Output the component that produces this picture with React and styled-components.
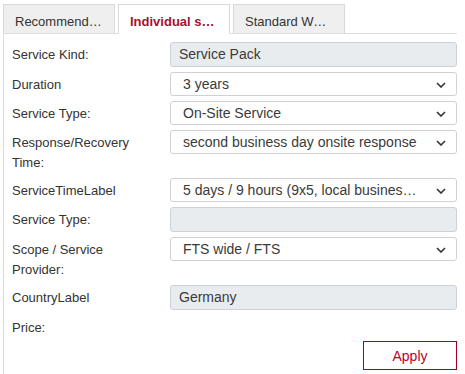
import { Fragment } from "react";
import styled, { createGlobalStyle } from "styled-components";

const GlobalStyle = createGlobalStyle`
    body {
        margin: 0;
        background: #ffffff;
        font-family: "Liberation Sans", Arial, sans-serif;
        color: #333333;
    }
`;

const TABS = [
    { id: "recommended", title: "Recommended Services" },
    { id: "individual", title: "Individual service" },
    { id: "standard", title: "Standard Warranty" },
];

const FIELDS = [
    { label: "Service Kind:", value: "Service Pack", disabled: true },
    { label: "Duration", value: "3 years" },
    { label: "Service Type:", value: "On-Site Service" },
    { label: "Response/Recovery Time:", value: "second business day onsite response" },
    { label: "ServiceTimeLabel", value: "5 days / 9 hours (9x5, local business hours)" },
    { label: "Service Type:", value: "", disabled: true },
    { label: "Scope / Service Provider:", value: "FTS wide / FTS" },
    { label: "CountryLabel", value: "Germany", disabled: true },
];

const Wrapper = styled.div`
    padding: 4px 8px 0 3px;
`;

const TabBar = styled.div`
    display: flex;
    align-items: flex-end;
    gap: 3px;
    height: 29px;
    border-bottom: 1px solid #dddddd;
`;

const Tab = styled.div`
    box-sizing: border-box;
    width: 112px;
    height: 30px;
    margin-bottom: -1px;
    padding: 9px 11px 0;
    border: 1px solid #d9d9d9;
    border-bottom-color: ${(p) => (p.$active ? "#ffffff" : "#dddddd")};
    background: ${(p) => (p.$active ? "#ffffff" : "#efefef")};
    color: ${(p) => (p.$active ? "#a8102f" : "#333333")};
    font-size: 13px;
    font-weight: ${(p) => (p.$active ? 700 : 400)};
    line-height: 16px;
    text-align: center;
    white-space: nowrap;
    overflow: hidden;
    text-overflow: ellipsis;
`;

const Panel = styled.div`
    border-left: 1px solid #dddddd;
    padding: 8px 0 8px 8px;
`;

const Form = styled.div`
    display: grid;
    grid-template-columns: 158px 1fr;
    row-gap: 5px;
    align-items: start;
`;

const Label = styled.div`
    padding: 3px 30px 0 0;
    font-size: 13px;
    line-height: 20px;
    color: #333333;
`;

const Control = styled.div`
    box-sizing: border-box;
    position: relative;
    height: ${(p) => (p.$disabled ? "25px" : "24px")};
    padding: ${(p) => (p.$disabled ? "0 12px 0 8px" : "0 36px 0 12px")};
    border: 1px solid #ced2d7;
    border-radius: 3px;
    background: ${(p) => (p.$disabled ? "#e9ecef" : "#ffffff")};
    color: #3a3a3a;
    font-size: 14px;
    line-height: ${(p) => (p.$disabled ? "23px" : "22px")};
    white-space: nowrap;
    overflow: hidden;
    text-overflow: ellipsis;
`;

const Chevron = styled.svg`
    position: absolute;
    right: 10px;
    top: 9px;
`;

const Footer = styled.div`
    display: flex;
    justify-content: flex-end;
    margin-top: 3px;
`;

const ApplyButton = styled.button`
    box-sizing: border-box;
    width: 94px;
    height: 29px;
    border: 1px solid #a50021;
    background: #ffffff;
    color: #c0002a;
    font-family: "Liberation Sans", Arial, sans-serif;
    font-size: 14px;
    cursor: pointer;
`;

function Select({ value }) {
    return (
        <Control>
            {value}
            <Chevron width="10" height="6" viewBox="0 0 10 6">
                <polyline points="1,1 5,5 9,1" fill="none" stroke="#333" strokeWidth="1.6" />
            </Chevron>
        </Control>
    );
}

function App() {
    return (
        <>
            <GlobalStyle />
            <Wrapper>
                <TabBar>
                    {TABS.map((t) => (
                        <Tab key={t.id} $active={t.id === "individual"}>
                            {t.title}
                        </Tab>
                    ))}
                </TabBar>
                <Panel>
                    <Form>
                        {FIELDS.map((f, i) => (
                            <Fragment key={i}>
                                <Label>{f.label}</Label>
                                {f.disabled ? (
                                    <Control $disabled>{f.value}</Control>
                                ) : (
                                    <Select value={f.value} />
                                )}
                            </Fragment>
                        ))}
                        <Label>Price:</Label>
                        <div />
                    </Form>
                    <Footer>
                        <ApplyButton>Apply</ApplyButton>
                    </Footer>
                </Panel>
            </Wrapper>
        </>
    );
}

export default App;
